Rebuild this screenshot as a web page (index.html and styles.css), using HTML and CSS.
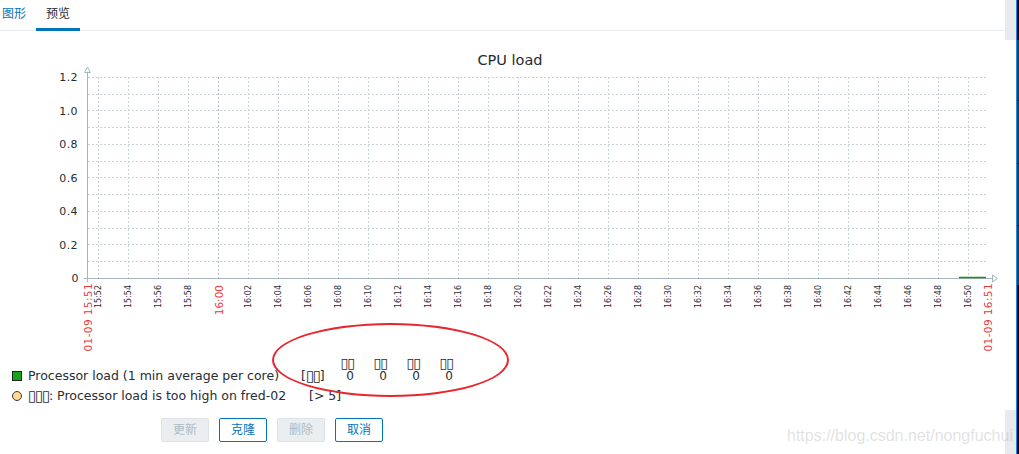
FILE: index.html
```html
<!DOCTYPE html>
<html lang="zh">
<head>
<meta charset="utf-8">
<title>CPU load</title>
<link rel="stylesheet" href="styles.css">
</head>
<body>
<div class="page">
  <div class="main">
    <div class="tabs">
      <span class="tab">图形</span>
      <span class="tab active">预览</span>
    </div>
    <svg class="chart" width="1005" height="326" viewBox="0 31 1005 326" xmlns="http://www.w3.org/2000/svg">
      <text class="title" x="510" y="65" text-anchor="middle">CPU load</text>
      <g class="grid">
        <line x1="88" y1="77.5" x2="986" y2="77.5"/>
        <line x1="88" y1="94.5" x2="986" y2="94.5"/>
        <line x1="88" y1="110.5" x2="986" y2="110.5"/>
        <line x1="88" y1="127.5" x2="986" y2="127.5"/>
        <line x1="88" y1="144.5" x2="986" y2="144.5"/>
        <line x1="88" y1="161.5" x2="986" y2="161.5"/>
        <line x1="88" y1="177.5" x2="986" y2="177.5"/>
        <line x1="88" y1="194.5" x2="986" y2="194.5"/>
        <line x1="88" y1="211.5" x2="986" y2="211.5"/>
        <line x1="88" y1="228.5" x2="986" y2="228.5"/>
        <line x1="88" y1="244.5" x2="986" y2="244.5"/>
        <line x1="88" y1="261.5" x2="986" y2="261.5"/>
        <line x1="98.5" y1="77" x2="98.5" y2="278"/>
        <line x1="128.5" y1="77" x2="128.5" y2="278"/>
        <line x1="158.5" y1="77" x2="158.5" y2="278"/>
        <line x1="188.5" y1="77" x2="188.5" y2="278"/>
        <line class="hour" x1="218.5" y1="77" x2="218.5" y2="278"/>
        <line x1="248.5" y1="77" x2="248.5" y2="278"/>
        <line x1="278.5" y1="77" x2="278.5" y2="278"/>
        <line x1="308.5" y1="77" x2="308.5" y2="278"/>
        <line x1="338.5" y1="77" x2="338.5" y2="278"/>
        <line x1="368.5" y1="77" x2="368.5" y2="278"/>
        <line x1="398.5" y1="77" x2="398.5" y2="278"/>
        <line x1="428.5" y1="77" x2="428.5" y2="278"/>
        <line x1="458.5" y1="77" x2="458.5" y2="278"/>
        <line x1="488.5" y1="77" x2="488.5" y2="278"/>
        <line x1="518.5" y1="77" x2="518.5" y2="278"/>
        <line x1="548.5" y1="77" x2="548.5" y2="278"/>
        <line x1="578.5" y1="77" x2="578.5" y2="278"/>
        <line x1="608.5" y1="77" x2="608.5" y2="278"/>
        <line x1="638.5" y1="77" x2="638.5" y2="278"/>
        <line x1="668.5" y1="77" x2="668.5" y2="278"/>
        <line x1="698.5" y1="77" x2="698.5" y2="278"/>
        <line x1="728.5" y1="77" x2="728.5" y2="278"/>
        <line x1="758.5" y1="77" x2="758.5" y2="278"/>
        <line x1="788.5" y1="77" x2="788.5" y2="278"/>
        <line x1="818.5" y1="77" x2="818.5" y2="278"/>
        <line x1="848.5" y1="77" x2="848.5" y2="278"/>
        <line x1="878.5" y1="77" x2="878.5" y2="278"/>
        <line x1="908.5" y1="77" x2="908.5" y2="278"/>
        <line x1="938.5" y1="77" x2="938.5" y2="278"/>
        <line x1="968.5" y1="77" x2="968.5" y2="278"/>
      </g>
      <g class="axis">
        <line x1="87.5" y1="72" x2="87.5" y2="282"/>
        <line x1="84" y1="278.5" x2="992" y2="278.5"/>
        <polygon points="84.5,72.5 87.5,67 90.5,72.5"/>
        <polygon points="992.5,275 997.5,278.5 992.5,282"/>
      </g>
      <line class="series" x1="959" y1="277.5" x2="986" y2="277.5"/>
      <g class="ylabels" text-anchor="end">
        <text x="78" y="81">1.2</text>
        <text x="78" y="114.5">1.0</text>
        <text x="78" y="148">0.8</text>
        <text x="78" y="181.5">0.6</text>
        <text x="78" y="215">0.4</text>
        <text x="78" y="248.5">0.2</text>
        <text x="79" y="282">0</text>
      </g>
      <g class="xlabels" text-anchor="end">
        <text transform="translate(101,285) rotate(-90)">15:52</text>
        <text transform="translate(131,285) rotate(-90)">15:54</text>
        <text transform="translate(161,285) rotate(-90)">15:56</text>
        <text transform="translate(191,285) rotate(-90)">15:58</text>
        <text class="red" transform="translate(222.5,285) rotate(-90)">16:00</text>
        <text transform="translate(251,285) rotate(-90)">16:02</text>
        <text transform="translate(281,285) rotate(-90)">16:04</text>
        <text transform="translate(311,285) rotate(-90)">16:06</text>
        <text transform="translate(341,285) rotate(-90)">16:08</text>
        <text transform="translate(371,285) rotate(-90)">16:10</text>
        <text transform="translate(401,285) rotate(-90)">16:12</text>
        <text transform="translate(431,285) rotate(-90)">16:14</text>
        <text transform="translate(461,285) rotate(-90)">16:16</text>
        <text transform="translate(491,285) rotate(-90)">16:18</text>
        <text transform="translate(521,285) rotate(-90)">16:20</text>
        <text transform="translate(551,285) rotate(-90)">16:22</text>
        <text transform="translate(581,285) rotate(-90)">16:24</text>
        <text transform="translate(611,285) rotate(-90)">16:26</text>
        <text transform="translate(641,285) rotate(-90)">16:28</text>
        <text transform="translate(671,285) rotate(-90)">16:30</text>
        <text transform="translate(701,285) rotate(-90)">16:32</text>
        <text transform="translate(731,285) rotate(-90)">16:34</text>
        <text transform="translate(761,285) rotate(-90)">16:36</text>
        <text transform="translate(791,285) rotate(-90)">16:38</text>
        <text transform="translate(821,285) rotate(-90)">16:40</text>
        <text transform="translate(851,285) rotate(-90)">16:42</text>
        <text transform="translate(881,285) rotate(-90)">16:44</text>
        <text transform="translate(911,285) rotate(-90)">16:46</text>
        <text transform="translate(941,285) rotate(-90)">16:48</text>
        <text transform="translate(971,285) rotate(-90)">16:50</text>
        <text class="red long" transform="translate(91.5,283) rotate(-90)">01-09 15:51</text>
        <text class="red long" transform="translate(991.5,283) rotate(-90)">01-09 16:51</text>
      </g>
    </svg>
    <div class="legend">
      <span class="cell c4 head"><span class="tofu">▯▯</span></span>
      <span class="cell c5 head"><span class="tofu">▯▯</span></span>
      <span class="cell c6 head"><span class="tofu">▯▯</span></span>
      <span class="cell c7 head"><span class="tofu">▯▯</span></span>

      <span class="cell c1 r2"><span class="swatch square"></span></span>
      <span class="cell c2 r2 name">Processor load (1 min average per core)</span>
      <span class="cell c3 r2">[<span class="tofu">▯▯</span>]</span>
      <span class="cell c4 r2 num">0</span>
      <span class="cell c5 r2 num">0</span>
      <span class="cell c6 r2 num">0</span>
      <span class="cell c7 r2 num">0</span>

      <span class="cell c1 r3"><span class="swatch circle"></span></span>
      <span class="cell c2 r3 name"><span class="tofu">▯▯▯</span>: Processor load is too high on fred-02</span>
      <span class="cell c3w r3 trig">[&gt; 5]</span>
    </div>
    <div class="actions">
      <button class="btn" disabled>更新</button>
      <button class="btn">克隆</button>
      <button class="btn" disabled>删除</button>
      <button class="btn">取消</button>
    </div>
  </div>
  <div class="gutter">
    <div class="gutter-top"></div>
    <div class="gutter-bottom"></div>
  </div>
  <div class="edge"></div>
  <div class="annotation"></div>
  <div class="watermark">https://blog.csdn.net/nongfuchui</div>
</div>
</body>
</html>
```
FILE: styles.css
```css
html, body {
  margin: 0;
  padding: 0;
  background: #ffffff;
}

.page {
  position: relative;
  display: flex;
  height: 454px;
  overflow: hidden;
  font-family: "Liberation Sans", "Noto Sans CJK SC", sans-serif;
  color: #1f2c33;
}

.main {
  width: 1005px;
  flex: none;
  display: flex;
  flex-direction: column;
}

/* tabs */
.tabs {
  display: flex;
  align-items: flex-start;
  height: 30px;
  margin-left: -8px;
  border-bottom: 1px solid #ebeef0;
}

.tab {
  box-sizing: border-box;
  height: 30px;
  padding: 0 10px;
  line-height: 28px;
  font-size: 12px;
  color: #0275b8;
}

.tab.active {
  height: 31px;
  margin-bottom: -1px;
  color: #1f2c33;
  border-bottom: 3px solid #0275b8;
}

/* chart */
.chart {
  display: block;
  font-family: "DejaVu Sans", sans-serif;
}

.chart .title {
  font-size: 14.5px;
  fill: #1f2c33;
}

.chart .grid line {
  stroke: #c9d2d7;
  stroke-width: 1;
  stroke-dasharray: 2 2;
}

.chart .grid line.hour {
  stroke: #a9b7bf;
}

.chart .axis line {
  stroke: #a7b4bc;
  stroke-width: 1;
}

.chart .axis polygon {
  fill: #ffffff;
  stroke: #a7b4bc;
  stroke-width: 1;
}

.chart .series {
  stroke: #1a8f1a;
  stroke-width: 1.5;
}

.chart .ylabels text {
  font-size: 11px;
  fill: #1f2c33;
  letter-spacing: 0.4px;
}

.chart .xlabels text {
  font-size: 8px;
  fill: #1f2c33;
}

.chart .xlabels text.red {
  font-size: 10.5px;
  fill: #e8383d;
}

.chart .xlabels text.long {
  letter-spacing: 0.4px;
}

/* legend */
.legend {
  display: grid;
  grid-template-columns: 16px 273px 21px 32px 33px 33px 33px;
  grid-template-rows: 11px 16px 24px;
  margin-left: 12px;
  font-family: "DejaVu Sans", sans-serif;
  font-size: 12.5px;
  color: #262d33;
}

.cell {
  display: flex;
  align-items: center;
  white-space: nowrap;
  line-height: 1;
}

.head, .num {
  justify-content: flex-end;
}

.num {
  font-size: 12px;
}

.head { grid-row: 1; }
.r2 { grid-row: 2; }
.r3 { grid-row: 3; }

.c1 { grid-column: 1; }
.c2 { grid-column: 2; }
.c3 { grid-column: 3; }
.c3w { grid-column: 3 / 8; }
.c4 { grid-column: 4; }
.c5 { grid-column: 5; }
.c6 { grid-column: 6; }
.c7 { grid-column: 7; }

.trig {
  padding-left: 8px;
}

.tofu {
  font-size: 15px;
  letter-spacing: -1.3px;
  line-height: 1;
}

.head .tofu {
  font-size: 14px;
  letter-spacing: -1px;
}

.swatch {
  box-sizing: border-box;
  width: 10px;
  height: 10px;
  border: 1px solid #1b2a1b;
}

.swatch.square {
  background: #1aa21a;
}

.swatch.circle {
  border-radius: 50%;
  background: #ffd88f;
  border-color: #3a3a3a;
}

/* buttons */
.actions {
  display: flex;
  gap: 10px;
  margin: 10px 0 0 161px;
}

.btn {
  box-sizing: border-box;
  height: 24px;
  padding: 0 11px;
  border: 1px solid #0275b8;
  border-radius: 2px;
  background: #ffffff;
  color: #0275b8;
  font-family: "Liberation Sans", "Noto Sans CJK SC", sans-serif;
  font-size: 12px;
  line-height: 22px;
}

.btn:disabled {
  background: #ebeef0;
  border-color: #dce2e5;
  color: #acbbc2;
}

/* right edge */
.gutter {
  width: 11px;
  flex: none;
  display: flex;
  flex-direction: column;
  justify-content: space-between;
}

.gutter-top {
  height: 40px;
  background: #e8ebee;
}

.gutter-bottom {
  height: 44px;
  background: #e8ebee;
}

.edge {
  width: 2px;
  flex: none;
  border-left: 1px solid #1e88e5;
  background: linear-gradient(to bottom,
    #050505 0, #050505 40px,
    #2d3a41 40px, #2d3a41 100px, #101010 100px, #101010 101px,
    #2d3a41 101px, #2d3a41 163px, #101010 163px, #101010 164px,
    #2d3a41 164px, #2d3a41 225px, #101010 225px, #101010 226px,
    #2d3a41 226px, #2d3a41 285px,
    #050505 285px, #050505 100%);
}

/* overlays */
.annotation {
  position: absolute;
  left: 272px;
  top: 323px;
  width: 233px;
  height: 70px;
  border: 2px solid #e8262d;
  border-radius: 50%;
  pointer-events: none;
}

.watermark {
  position: absolute;
  left: 787px;
  top: 426px;
  font-family: "Liberation Sans", sans-serif;
  font-size: 16px;
  line-height: 20px;
  color: rgba(170, 170, 170, 0.35);
  white-space: nowrap;
}
```
